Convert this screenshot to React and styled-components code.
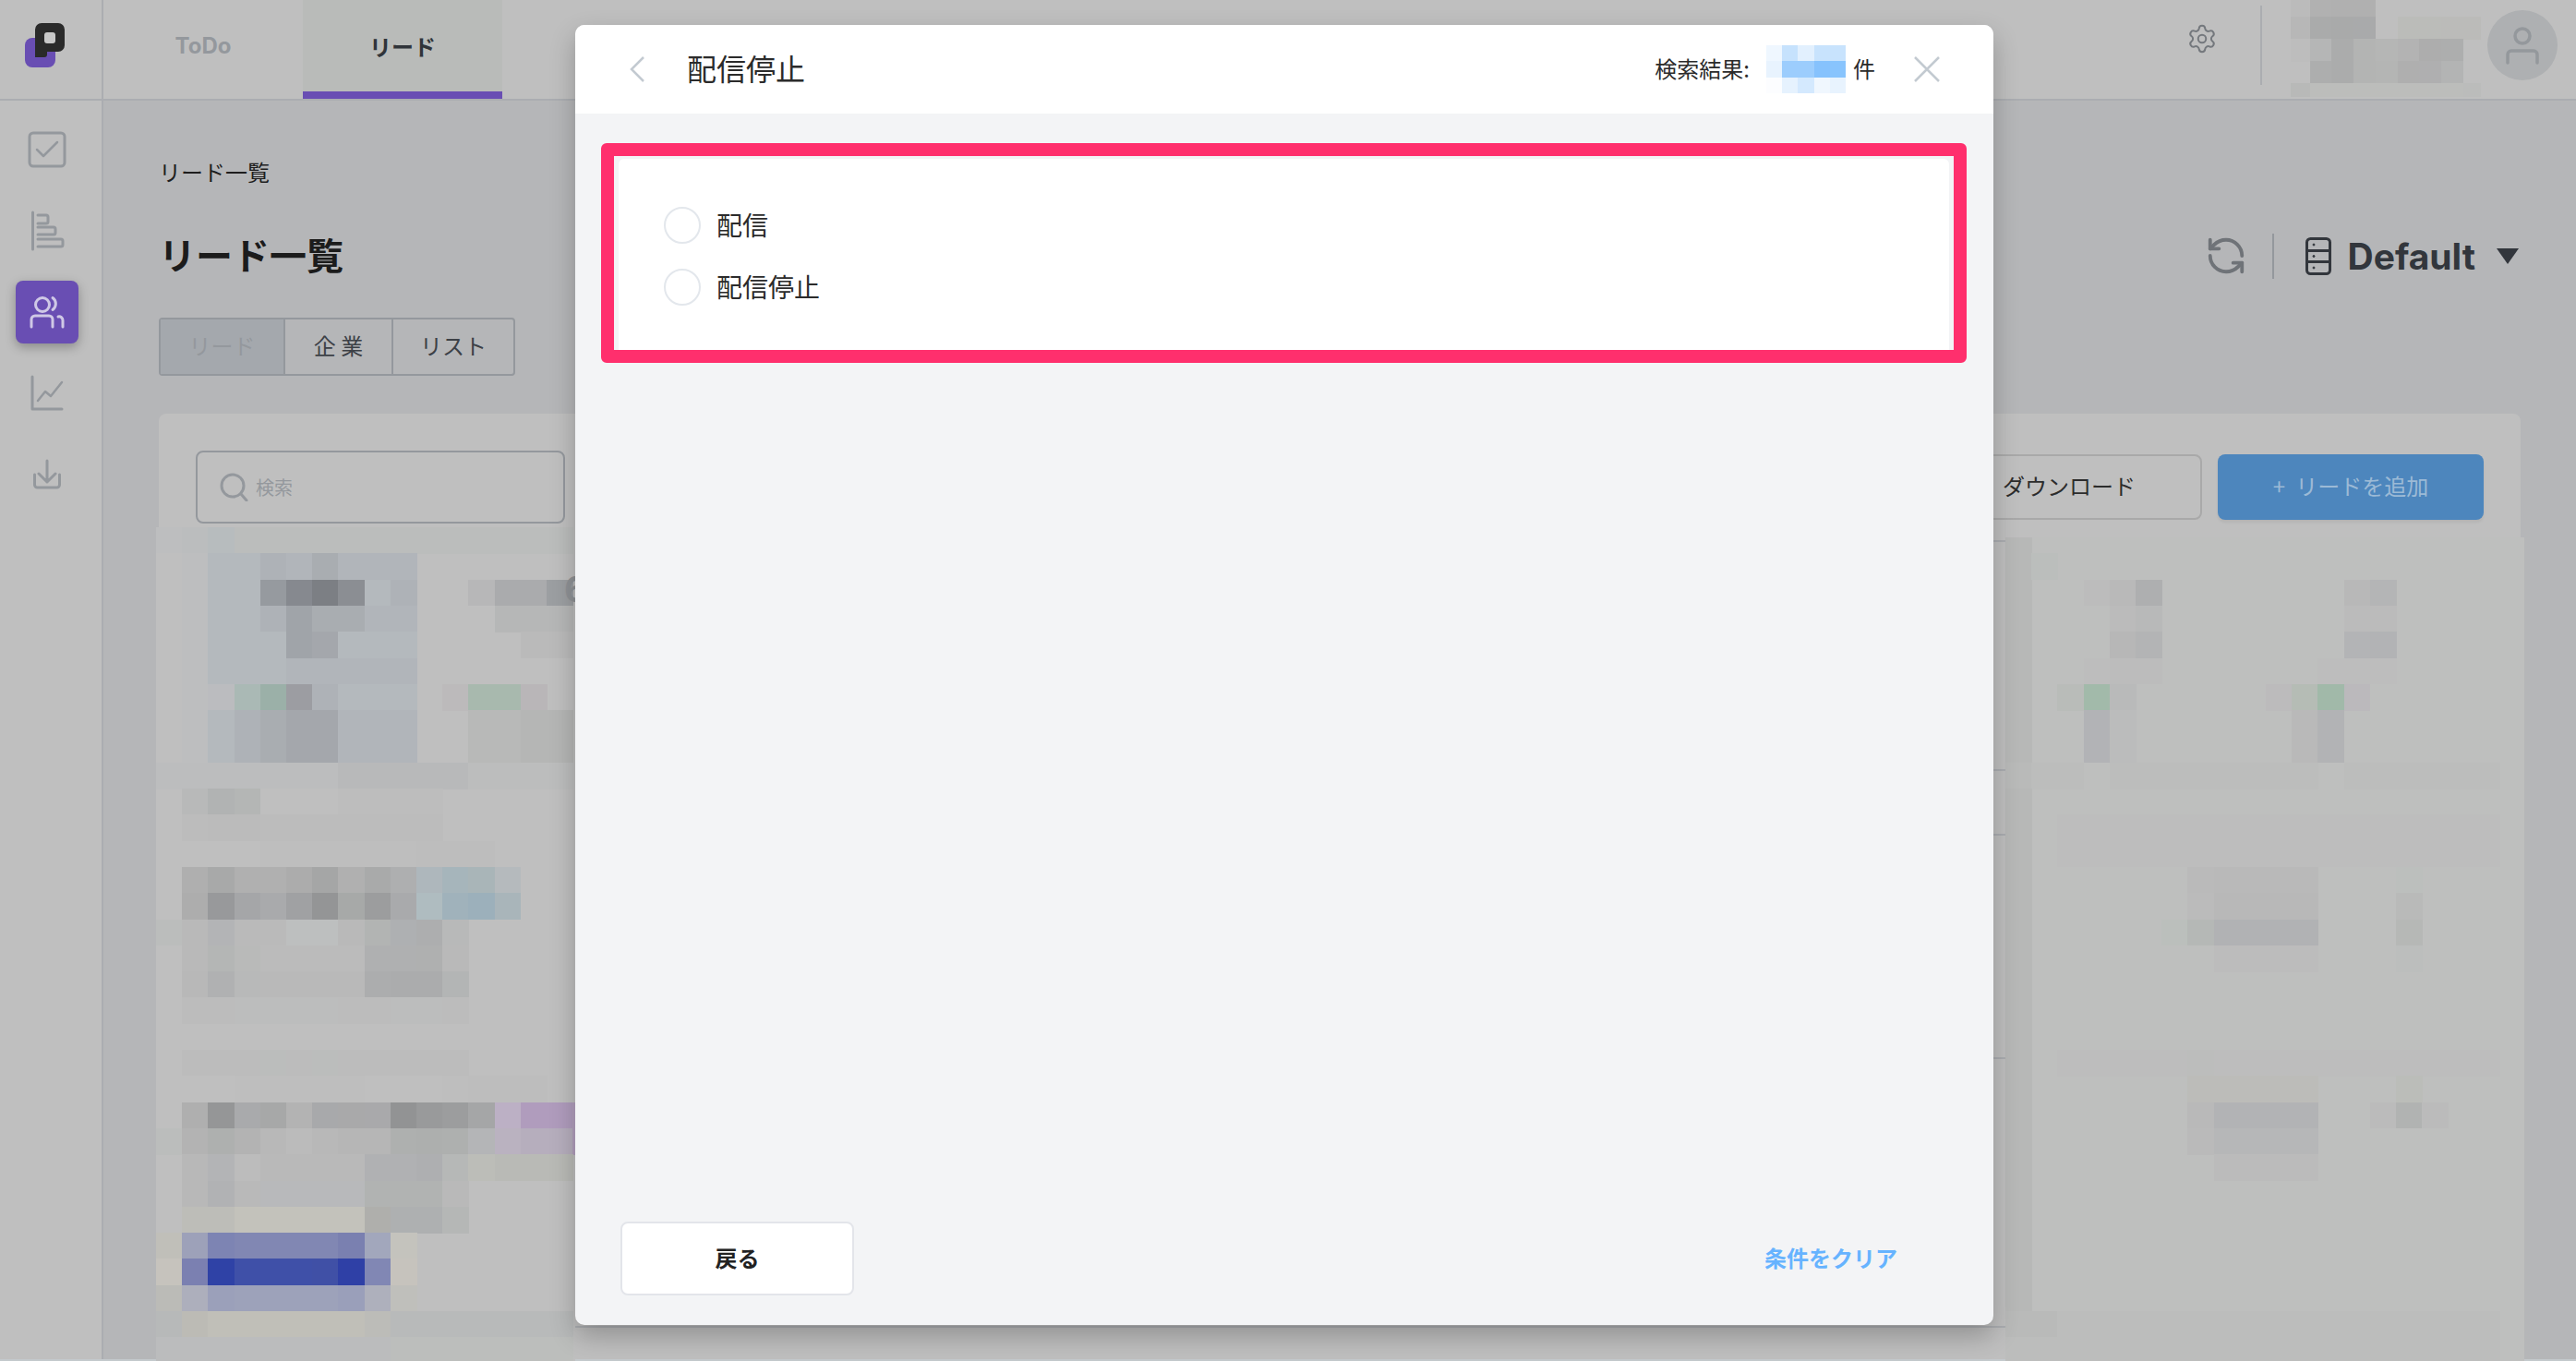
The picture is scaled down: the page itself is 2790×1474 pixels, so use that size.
import React from 'react';
import styled, { createGlobalStyle } from 'styled-components';
import { RefreshCcw, Settings } from 'lucide-react';

// page colours are written as seen, with the modal's dimming already in them
const JP = `"Noto Sans CJK JP", "Noto Sans", sans-serif`;
const LATIN = `Inter, "Noto Sans CJK JP", sans-serif`;
const LINE = '#abadb1';
const MUTED = '#94989d';

const GlobalStyle = createGlobalStyle`
  html, body { margin: 0; padding: 0; background: #b5b6b8; }
  * { box-sizing: border-box; }
  body { font-family: ${JP}; }
`;

const Shell = styled.div`
  position: relative;
  width: 2790px;
  height: 1474px;
  overflow: hidden;
  display: flex;
  flex-direction: column;
  background: #b5b6b8;
`;

const TopBar = styled.header`
  flex: none;
  height: 109px;
  display: flex;
  background: #bfbfbf;
  border-bottom: 2px solid ${LINE};
`;
const LogoCell = styled.div`
  flex: none;
  width: 112px;
  padding: 25px 0 0 27px;
  border-right: 2px solid ${LINE};
`;
const Tab = styled.div`
  flex: none;
  width: ${(p) => p.$w}px;
  display: flex;
  align-items: center;
  justify-content: center;
  font-family: ${LATIN};
  font-size: 24px;
  font-weight: 700;
  color: ${(p) => (p.$active ? '#30343a' : MUTED)};
  background: ${(p) => (p.$active ? '#b9bbb9' : 'transparent')};
  border-bottom: 8px solid ${(p) => (p.$active ? '#694eb3' : 'transparent')};
`;
const TopRight = styled.div`
  margin-left: auto;
  height: 98px;
  display: flex;
  align-items: center;
  padding-right: 20px;
  color: #74787d;
`;
const GearWrap = styled.div`
  display: flex;
  margin: 0 46px 14px 0;
`;
const TopDivider = styled.div`
  width: 2px;
  height: 86px;
  margin-right: 31px;
  background: ${LINE};
`;
const Avatar = styled.div`
  width: 76px;
  height: 76px;
  margin-left: 7px;
  border-radius: 50%;
  background: #aeb0b2;
  display: flex;
  align-items: center;
  justify-content: center;
`;

const Columns = styled.div`
  flex: 1;
  display: flex;
  min-height: 0;
  border-bottom: 2px solid #c3c9cc;
`;
const Sidebar = styled.nav`
  flex: none;
  width: 112px;
  padding: 19px 0 0 17px;
  display: flex;
  flex-direction: column;
  gap: 20px;
  background: #bfbfbf;
  border-right: 2px solid ${LINE};
`;
const NavItem = styled.div`
  width: 68px;
  height: 68px;
  display: flex;
  border-radius: 8px;
  color: ${(p) => (p.$active ? '#cfc8e6' : MUTED)};
  background: ${(p) => (p.$active ? '#694eb3' : 'transparent')};
  box-shadow: ${(p) => (p.$active ? '0 4px 12px rgba(0, 0, 0, 0.28)' : 'none')};
`;

const Main = styled.main`
  flex: 1;
  min-width: 0;
  padding: 60px 60px 0 60px;
  display: flex;
  flex-direction: column;
`;
const Breadcrumb = styled.div`
  font-size: 24px;
  line-height: 34px;
  color: #1e1e1e;
`;
const TitleRow = styled.div`
  margin-top: 42px;
  height: 60px;
  display: flex;
  align-items: center;
  justify-content: space-between;
`;
const PageTitle = styled.h1`
  margin: 0;
  font-size: 40px;
  font-weight: 700;
  color: #1c1c1c;
`;
const ViewPicker = styled.div`
  display: flex;
  align-items: center;
  margin: 4px 2px 0 0;
  color: #32363c;
`;
const PickerDivider = styled.div`
  width: 2px;
  height: 49px;
  margin: 0 34px 0 27px;
  background: ${MUTED};
`;
const ViewName = styled.span`
  margin: 0 23px 0 18px;
  font-family: ${LATIN};
  font-size: 39px;
  font-weight: 700;
`;
const Caret = styled.span`
  border-left: 12.5px solid transparent;
  border-right: 12.5px solid transparent;
  border-top: 17px solid #32363c;
`;
const Segments = styled.div`
  margin-top: 39px;
  align-self: flex-start;
  height: 63px;
  display: flex;
  border: 2px solid ${MUTED};
  border-radius: 4px;
`;
const Segment = styled.div`
  width: ${(p) => p.$w}px;
  display: flex;
  align-items: center;
  justify-content: center;
  padding-bottom: 4px;
  font-size: 24px;
  color: ${(p) => (p.$active ? MUTED : '#3c4046')};
  background: ${(p) => (p.$active ? '#a4a8ad' : 'transparent')};
  & + & { border-left: 2px solid ${MUTED}; }
`;

const ListCard = styled.section`
  margin-top: 41px;
  flex: 1;
  padding: 40px 40px 0;
  background: #bfbfbf;
  border-radius: 8px 8px 0 0;
`;
const Toolbar = styled.div`
  height: 79px;
  display: flex;
  align-items: center;
  gap: 17px;
`;
const SearchBox = styled.div`
  width: 400px;
  height: 79px;
  margin-right: auto;
  padding-left: 24px;
  display: flex;
  align-items: center;
  gap: 8px;
  border: 2px solid ${MUTED};
  border-radius: 8px;
  font-size: 20px;
  color: ${MUTED};
`;
const ToolButton = styled.div`
  width: 288px;
  height: 71px;
  display: flex;
  align-items: center;
  justify-content: center;
  padding-bottom: 4px;
  font-size: 24px;
  word-spacing: 6px;
  border-radius: 8px;
  color: ${(p) => (p.$primary ? '#9cbad6' : '#2c2c2c')};
  background: ${(p) => (p.$primary ? '#4d86bd' : 'transparent')};
  border: ${(p) => (p.$primary ? 'none' : '2px solid #a9a9a9')};
  box-shadow: ${(p) => (p.$primary ? '0 3px 3px rgba(0, 0, 0, 0.06)' : 'none')};
`;
const Table = styled.div`
  position: relative;
  margin: 18px -40px 0;
`;
const Row = styled.div`
  height: ${(p) => p.$h}px;
  border-top: 2px solid ${LINE};
`;
const MosaicSlot = styled.div`
  position: absolute;
  top: ${(p) => p.$top}px;
  left: ${(p) => (p.$left === undefined ? 'auto' : `${p.$left}px`)};
  right: ${(p) => (p.$right === undefined ? 'auto' : `${p.$right}px`)};
  display: flex;
`;
const ClippedDigit = styled.span`
  position: absolute;
  z-index: 1;
  left: 439px;
  top: 30px;
  font-family: ${LATIN};
  font-size: 38px;
  font-weight: 700;
  color: #8f9296;
`;

const Modal = styled.div`
  position: absolute;
  z-index: 2;
  left: 623px;
  top: 27px;
  width: 1536px;
  height: 1408px;
  display: flex;
  flex-direction: column;
  border-radius: 10px;
  background: #f3f4f6;
  box-shadow: 0 12px 28px rgba(0, 0, 0, 0.24);
`;
const ModalHead = styled.div`
  flex: none;
  height: 96px;
  padding: 0 58px 0 59px;
  display: flex;
  align-items: center;
  background: #fff;
  border-radius: 10px 10px 0 0;
`;
const ModalTitle = styled.div`
  margin: 0 auto 5px 46px;
  font-size: 32px;
  color: #2b2b2b;
`;
const ResultText = styled.div`
  margin-bottom: 3px;
  font-size: 24px;
  color: #2b2b2b;
`;
const ResultCount = styled.div`
  display: flex;
  margin: 0 8px 0 18px;
`;
const CloseWrap = styled.div`
  display: flex;
  margin-left: 42px;
`;
const HighlightFrame = styled.div`
  flex: none;
  height: 238px;
  margin: 32px 29px 0 28px;
  padding: 3px 5px 0;
  border: 14px solid #ff2f6d;
  border-radius: 6px;
  overflow: hidden;
`;
const OptionCard = styled.div`
  height: 100%;
  padding: 52px 0 0 49px;
  display: flex;
  flex-direction: column;
  gap: 27px;
  background: #fff;
  border-radius: 6px 6px 0 0;
`;
const Option = styled.label`
  height: 40px;
  display: flex;
  align-items: center;
  gap: 17px;
  font-size: 28px;
  color: #2b2b2b;
`;
const OptionText = styled.span`
  margin-bottom: 3px;
`;
const RadioMark = styled.span`
  flex: none;
  width: 40px;
  height: 40px;
  border: 2px solid #e3e7ec;
  border-radius: 50%;
  background: #fff;
`;
const ModalFoot = styled.div`
  margin-top: auto;
  padding: 0 104px 32px 49px;
  display: flex;
  align-items: center;
  justify-content: space-between;
`;
const BackButton = styled.div`
  width: 253px;
  height: 80px;
  display: flex;
  align-items: center;
  justify-content: center;
  padding-bottom: 4px;
  font-size: 24px;
  font-weight: 700;
  color: #222;
  background: #fff;
  border: 2px solid #e3e5ea;
  border-radius: 8px;
`;
const ClearLink = styled.div`
  margin-bottom: 4px;
  font-size: 24px;
  font-weight: 700;
  color: #66b3ff;
`;

// mosaic rows: space separated cells, 2 digits = grey, 6 digits = rgb, "." = background
const Mosaic = ({ width, height, cellW, cellH, rows, offsetX = 0, offsetY = 0, background }) => (
  <svg width={width} height={height} shapeRendering="crispEdges">
    {background && <rect width={width} height={height} fill={background} />}
    {rows.map((row, y) =>
      row.split(' ').map((cell, x) =>
        cell === '.' || cell === '' ? null : (
          <rect
            key={`${x}-${y}`}
            x={x * cellW + offsetX}
            y={y * cellH + offsetY}
            width={cellW + 0.5}
            height={cellH + 0.5}
            fill={cell.length === 2 ? `#${cell}${cell}${cell}` : `#${cell}`}
          />
        )
      )
    )}
  </svg>
);

const LEFT_ROWS = [
  'bdbebf bbbdbe b7bcbe bbbdbc bbbdbc bbbdbc bbbdbc bbbdbc bbbdbc bbbdbc bbbdbc bbbdbc bbbdbc bbbdbc bbbdbc bbbdbc',
  'bfbfbf bdbebf b4b9bd b4b9bd aeb2b7 b1b5ba a9adb1 b1b5ba b1b5ba b1b5ba . . . . . .',
  'bfbfbf bdbebf b4b9bd b4b9bd 969a9f 86898f 7c7f84 8b8e93 b4b9bd aeb2b7 . . b7b7b8 aaabad aaabad 9c9fa2',
  'bfbfbf bdbebf b4b9bd b4b9bd aeb2b7 a0a4a9 a9adb1 a9adb1 b1b5ba b1b5ba . . . b6b7b7 b6b7b7 b6b7b7',
  'bfbfbf bdbebf b4b9bd b4b9bd b4b9bd a0a4a9 a4a7ac b4b9bd b4b9bd b4b9bd . . . . bababa bababa',
  'bfbfbf bdbebf b4b9bd b4b9bd b4b9bd b1b5ba b1b5ba b1b5ba b1b5ba b1b5ba',
  'bfbfbf bdbebf bbbcbf aab9b5 9bb0a8 9c9da2 aeb2b7 b4b9bd b4b9bd b4b9bd . bcbabb a8b9ae a8b9ae b9b6b8',
  'bfbfbf bdbebf b4b9bd aeb2b7 a9adb1 a4a7ac a4a7ac b1b5ba b1b5ba b1b5ba . . b8b9b8 b8b9b8 b5b6b5 b5b6b5',
  'bfbfbf bdbebf b4b9bd aeb2b7 a9adb1 a4a7ac a4a7ac b1b5ba b1b5ba b1b5ba . . b8b9b8 b8b9b8 b5b6b5 b5b6b5',
  'bcbdbe bcbdbe bcbdbe bcbdbe bcbdbe bcbdbe bcbdbe b8b9ba b8b9ba b8b9ba b8b9ba b8b9ba bcbdbd bcbdbd bcbdbd bcbdbd',
  '. b8b9b9 b1b3b3 b4b6b5 bf bf bf bd bd bd bd',
  '. bc bb bb bc bc bc bc bc bc bc',
  '. bf bf bf be be be be be be bd bd bd',
  '. af a8a9a9 b0 b0 ac a5a6a6 b0 a9aaaa aeafb0 aeb7bc a6b5bb a9b5b8 b5babd',
  '. adadad 98999b a5a6a8 a9aaac a0a1a3 949596 a7a9a8 9c9d9e a9aaac afbcc0 a0b2bb 9cb0bb a9b5ba',
  'bbbdbc b9 b3b4b6 ba ba bdbfbf bdbfbf b9 b2b4b3 aeb0b2 adaeaf b8b9b9',
  '. b9 b4b6b5 b9bab9 bb bb bb bb afb0b1 afb0b1 afb0b0 b9',
  '. b8 b0b1b2 b8b9b9 b9 b9 b9 b9 acadae abacad abacad b3b5b5',
  '. bc bc bcbdbd bcbdbd bcbdbd bcbdbd bc bc bcbdbd bcbdbd bc',
  '',
  '. bc bc bc bbbdbc bc bbbdbc bc bc bc bc bc',
  '. bf bf be be be be be bf bf bf be bd bd bd',
  '. af 959697 a9aaac a7a8a8 b3 a8a9ab a9a9aa a9a9ab 929394 999a9b 9c9d9e a5a6a7 bcb0c5 b09cbd b09cbd b3a0be',
  'bbbdbc b3 aeb0af b3 b8 bb b8 b6 b6 aeb0af adafae aeb0af b4b5b7 bab2c0 b6aebd b6aebd b3a0be',
  '. b8 b3b4b6 bc b9 b9 b9 b9 b0b1b3 b0b1b3 aeafb1 b6b8b7 bcbdb8 b9bab6 b9bab6 b9bab6',
  '. b8 b1b2b4 b9 b8b9bb b8b9bb b8b9bb b8b9bb b1b3b2 b1b3b2 b1b3b2 b9',
  '. bdbdb8 bdbdb8 c3c2bb c3c2bb c3c2bb c3c2bb c3c2bb afafac aeb0b1 aeb0b1 b5b7b6',
  'c0bfb9 9da1b9 7d84b3 8187b3 8187b3 8187b3 8187b3 7a80b0 a2a7bc c4c3bd',
  'c6c3bd 7b80b1 2f42a6 3f50a8 3f50a8 3f50a8 4050a6 2f40a6 8187b4 c6c3bd',
  'bbbbb7 adafbc 9ba0ba 9da2ba 9da2ba 9da2ba 9da2ba 9a9fba aeb0bc bfbfbb',
  'b7b9b9 bcbbb5 c0bfb8 c0bfb8 c0bfb8 c0bfb8 c0bfb8 c0bfb8 bcbcb8 b8baba b8baba b8baba b8baba b8baba b8baba b8baba',
  'bbbcbd bbbcbd bbbcbd bbbcbd bbbcbd bbbcbd bbbcbd bbbcbd bbbcbd bcbebc bcbebc bcbebc bcbebc bcbebc bcbebc bcbebc',
];

const RIGHT_ROWS = [
  'b7b8b7',
  'b7b8b7 bbbebc',
  'b7b8b7 . . bc b9 aeafb0 . . . . . . . b8 b4b5b6',
  'b7b8b7 . . . bb b8b9b9 . . . . . . . bb bb',
  'b7b8b7 . . . b7 b3b4b5 . . . . . . . b3b4b6 b2b3b5',
  'b7b8b7 . . bd bc bc . . . . . . bd bd bd',
  'b7b8b7 . b9bcb9 a2baaa b9baba . . . . . bcbbbc b5bcb5 a1b9a9 bbb9bc',
  'b7b8b7 . . b2b3b6 bbbcbc . . . . . . b9 b2b3b5',
  'b7b8b7 . . b2b3b6 bbbcbc . . . . . . b9 b2b3b5',
  'b9bab9 bcbdbc bcbdbc . bcbdbc bcbdbc bcbdbc bcbdbc bcbdbc bcbdbc bcbdbc bcbdbc . bcbdbc bcbdbc bcbdbc bcbdbc bcbdbc bcbdbc',
  'b7b8b7',
  'b7b8b7 . bd bd bd bd bd bd bd bd bd bd bd bd bd bd bd bd bd',
  'b7b8b7 . bd bd bd bd bd bd bd bd bd bd bd bd bd bd bd bd bd',
  'b7b8b7 . . . . . . ba b9 b9 b9 b9 . . . bcbfbd',
  'b7b8b7 . . . . . . bb b8 b8 b8 b8 . . . b9bab9',
  'b7b8b7 . . . . . bbbfbc b5b8b6 b1b2b4 b1b2b4 b1b2b4 b1b2b4 . . . b6b8b6',
  'b7b8b7 . . . . . . . bc bc bc bc . . . bcbebd',
  'b7b8b7',
  'b7b8b7',
  'b7b8b7',
  'b7b8b7 . bd bd bd bd bd bcbdbc bd bd bd bd bd bd bd bd bd bd bd',
  'b7b8b7 . . . . . . bcbcb9 bcbcb9 bcbcb9 bcbcb9 bcbcb9 . . . bbbdb9',
  'b7b8b7 . . . . . . b9 b2b3b5 b2b3b5 b2b3b5 b2b3b5 . . bb b1b3b2 bb',
  'b7b8b7 . . . . . . ba b6b7b8 b6b7b8 b6b7b8 b6b7b8',
  'b7b8b7 . . . . . . . bb bb bb bb',
  'b7b8b7',
  'b7b8b7',
  'b7b8b7',
  'b7b8b7',
  'b7b8b7',
  'b9bab9 b9bab9 bcbdbc bcbdbc bcbdbc bcbdbc bcbdbc bcbdbc bcbdbc bcbdbc bcbdbc bcbdbc bcbdbc bcbdbc bcbdbc bcbdbc bcbdbc bcbdbc bcbdbc',
  'bcbdbc bcbdbc bcbdbc bcbdbc bcbdbc bcbdbc bcbdbc bcbdbc bcbdbc bcbdbc bcbdbc bcbdbc bcbdbc bcbdbc bcbdbc bcbdbc bcbdbc bcbdbc bcbdbc',
];

const USER_ROWS = [
  'bb b1 b0 b0',
  'b7 aaabab a9aaaa a9aaab . bbbcb9 bbbcb9 bbbbb9 bbbbb9',
  'bd b5b6b6 abacac b3b4b3 b5b6b5 b3 ad adaeae',
  '. adaeae abacac b3b4b3 b4b5b4 af afafb0 b3b4b4',
  'b8b9b8 bcbdbb bcbdbb bcbdbb bcbdbb bcbdbb bcbdbb bcbdbb bbbcbb',
];

const COUNT_ROWS = [
  'eff7ff c6e2fd e2f0fe c8e3fd c8e3fd e8f3fe',
  'e8f3fe 9ccdfd 9ccdfd 86c2fd 88c4fd a6d2fd',
  'fcfdff e6f2fe d4e9fe f0f7fe e8f3fe f0f7ff',
];

const Logo = () => (
  <svg width="43" height="48" viewBox="0 0 43 48">
    <rect x="0" y="16" width="33" height="32" rx="8" fill="#694eb3" />
    <path
      fill="#2a2a2a"
      d="M18 0h18a7 7 0 0 1 7 7v17a7 7 0 0 1-7 7H24v3a3 3 0 0 1-3 3H11V7a7 7 0 0 1 7-7z"
    />
    <rect x="21" y="10" width="12" height="12" rx="3" fill="#c8c8c8" />
  </svg>
);

const NavGlyph = ({ children }) => (
  <svg width="68" height="68" viewBox="0 0 68 68" fill="none" stroke="currentColor" strokeWidth="3" strokeLinecap="round" strokeLinejoin="round">
    {children}
  </svg>
);

const AvatarGlyph = () => (
  <svg width="40" height="44" viewBox="0 0 40 44" fill="none" stroke="#94989c" strokeWidth="3.5" strokeLinecap="round">
    <circle cx="20" cy="12" r="8" />
    <path d="M4 41V32a4 4 0 0 1 4-4h24a4 4 0 0 1 4 4v9" />
  </svg>
);

const StackGlyph = () => (
  <svg width="28" height="41" viewBox="0 0 28 41" fill="none" stroke="currentColor" strokeWidth="3">
    <rect x="1.5" y="1.5" width="25" height="38" rx="4" />
    <path d="M1.5 14.5h25M1.5 26.5h25" />
    <circle cx="9" cy="8" r="1" fill="currentColor" strokeWidth="1" />
    <circle cx="9" cy="20.5" r="1" fill="currentColor" strokeWidth="1" />
    <circle cx="9" cy="33" r="1" fill="currentColor" strokeWidth="1" />
  </svg>
);

const SearchGlyph = () => (
  <svg width="31" height="31" viewBox="0 0 31 31" fill="none" stroke={MUTED} strokeWidth="3" strokeLinecap="round">
    <circle cx="14" cy="14" r="12" />
    <path d="M23 23l6 7" />
  </svg>
);

const Chevron = () => (
  <svg width="16" height="28" viewBox="0 0 16 28" fill="none" stroke="#c3cad1" strokeWidth="2.5">
    <path d="M15 1L2 14l13 13" />
  </svg>
);

const CloseGlyph = () => (
  <svg width="28" height="28" viewBox="0 0 28 28" fill="none" stroke="#c3cad1" strokeWidth="2.5">
    <path d="M1 1l26 26M27 1L1 27" />
  </svg>
);

const App = () => (
  <Shell>
    <GlobalStyle />
    <TopBar>
      <LogoCell>
        <Logo />
      </LogoCell>
      <Tab $w={216}>ToDo</Tab>
      <Tab $w={216} $active>リード</Tab>
      <Tab $w={216}>営業</Tab>
      <TopRight>
        <GearWrap>
          <Settings size={34} strokeWidth={1.4} />
        </GearWrap>
        <TopDivider />
        <Mosaic width={206} height={111} cellW={23.7} cellH={24} offsetX={-3} rows={USER_ROWS} />
        <Avatar>
          <AvatarGlyph />
        </Avatar>
      </TopRight>
    </TopBar>

    <Columns>
      <Sidebar>
        <NavItem>
          <NavGlyph>
            <rect x="15" y="16" width="38" height="36" rx="4" />
            <path d="M23 34l7 7 15-15" strokeWidth="2.5" />
          </NavGlyph>
        </NavItem>
        <NavItem>
          <NavGlyph>
            <path d="M18.5 14v40" />
            <path d="M24 17h9a2 2 0 0 1 2 2v5a2 2 0 0 1-2 2h-9M24 30h17a2 2 0 0 1 2 2v4a2 2 0 0 1-2 2H24M24 43h25a2 2 0 0 1 2 2v4a2 2 0 0 1-2 2H24" />
          </NavGlyph>
        </NavItem>
        <NavItem $active>
          <NavGlyph>
            <circle cx="29" cy="26" r="7.5" />
            <path d="M40 18.5a8 8 0 0 1 0 13M17 50v-8a4 4 0 0 1 4-4h15a4 4 0 0 1 4 4v8M46 39a4 4 0 0 1 5 4v7" />
          </NavGlyph>
        </NavItem>
        <NavItem>
          <NavGlyph>
            <path d="M18 16v35h32" />
            <path d="M24 42l8-10 6 5 12-15" strokeWidth="2.5" />
          </NavGlyph>
        </NavItem>
        <NavItem>
          <NavGlyph>
            <path d="M34 19v23M25 33l9 9 9-9M20.5 34v11a3 3 0 0 0 3 3h21a3 3 0 0 0 3-3V34" />
          </NavGlyph>
        </NavItem>
      </Sidebar>

      <Main>
        <Breadcrumb>リード一覧</Breadcrumb>
        <TitleRow>
          <PageTitle>リード一覧</PageTitle>
          <ViewPicker>
            <RefreshCcw size={46} strokeWidth={2} color="#6f7378" />
            <PickerDivider />
            <StackGlyph />
            <ViewName>Default</ViewName>
            <Caret />
          </ViewPicker>
        </TitleRow>
        <Segments>
          <Segment $w={133} $active>リード</Segment>
          <Segment $w={117}>企 業</Segment>
          <Segment $w={132}>リスト</Segment>
        </Segments>
        <ListCard>
          <Toolbar>
            <SearchBox>
              <SearchGlyph />
              検索
            </SearchBox>
            <ToolButton>ダウンロード</ToolButton>
            <ToolButton $primary>+ リードを追加</ToolButton>
          </Toolbar>
          <Table>
            <Row $h={248} />
            <Row $h={70} />
            <Row $h={242} />
            <Row $h={291} />
            <Row $h={36} />
            <ClippedDigit>6</ClippedDigit>
            <MosaicSlot $left={-3} $top={-14}>
              <Mosaic width={454} height={903} cellW={28.2} cellH={28.3} rows={LEFT_ROWS} background="#bfbfbf" />
            </MosaicSlot>
            <MosaicSlot $right={-4} $top={-3}>
              <Mosaic width={562} height={892} cellW={28.2} cellH={28.3} offsetY={-11} rows={RIGHT_ROWS} background="#bebfbe" />
            </MosaicSlot>
          </Table>
        </ListCard>
      </Main>
    </Columns>

    <Modal>
      <ModalHead>
        <Chevron />
        <ModalTitle>配信停止</ModalTitle>
        <ResultText>検索結果:</ResultText>
        <ResultCount>
          <Mosaic width={86} height={52} cellW={17.2} cellH={17.4} rows={COUNT_ROWS} />
        </ResultCount>
        <ResultText>件</ResultText>
        <CloseWrap>
          <CloseGlyph />
        </CloseWrap>
      </ModalHead>
      <HighlightFrame>
        <OptionCard>
          <Option>
            <RadioMark />
            <OptionText>配信</OptionText>
          </Option>
          <Option>
            <RadioMark />
            <OptionText>配信停止</OptionText>
          </Option>
        </OptionCard>
      </HighlightFrame>
      <ModalFoot>
        <BackButton>戻る</BackButton>
        <ClearLink>条件をクリア</ClearLink>
      </ModalFoot>
    </Modal>
  </Shell>
);

export default App;
